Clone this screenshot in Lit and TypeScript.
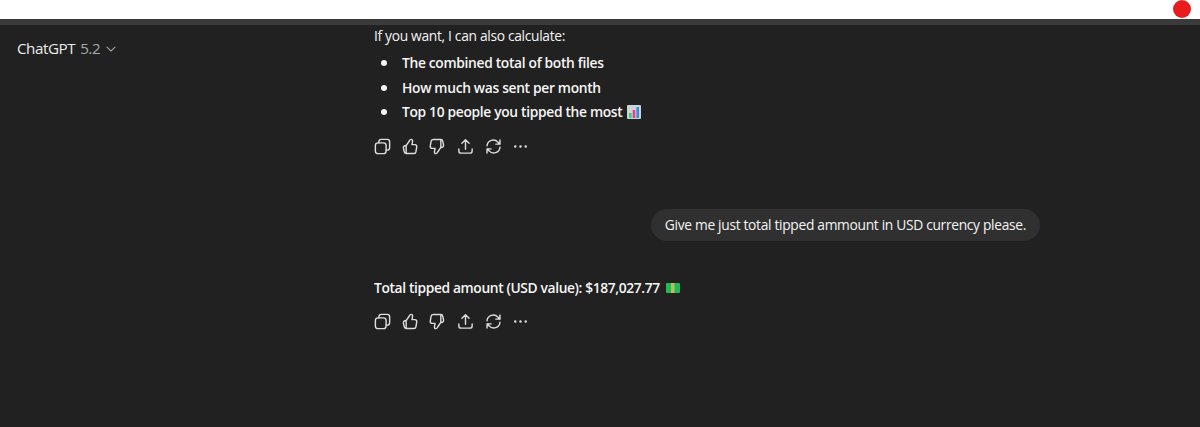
import { LitElement, html, css, svg } from "lit";
import { customElement } from "lit/decorators.js";

const I = (c: unknown) => html`<svg class="ic" viewBox="0 0 20 20" fill="none" stroke="currentColor" stroke-width="1.500" stroke-linecap="round" stroke-linejoin="round">${c}</svg>`;
const copy = I(svg`<path d="M6.200 6.200V5a2.500 2.500 0 0 1 2.500-2.500H15A2.500 2.500 0 0 1 17.500 5v6.300a2.500 2.500 0 0 1-2.500 2.500h-1.200"/><rect x="2.500" y="6.200" width="11.300" height="11.300" rx="2.800"/>`);
const up = I(svg`<path d="M6.500 9 9.800 4.200c.4-.9 1-1.700 1.900-1.700 1.200 0 1.700 1 1.500 2.100L12.600 8h3a2 2 0 0 1 2 2.400l-.8 4.900a2.300 2.300 0 0 1-2.300 2H6.500a2 2 0 0 1-2-1.600L3.600 11.600C3.400 10.200 4.500 9 6 9h.5v8.200"/>`);
const down = I(svg`<path d="M13.500 11 10.200 15.800c-.4.900-1 1.700-1.900 1.700-1.200 0-1.700-1-1.500-2.100L7.400 12h-3a2 2 0 0 1-2-2.400l.8-4.900a2.300 2.300 0 0 1 2.300-2h8a2 2 0 0 1 2 1.600l.9 4.300c.2 1.400-.9 2.400-2.400 2.400h-.500V2.800"/>`);
const share = I(svg`<path d="M10 13V3M6.200 6.500 10 2.800l3.800 3.700M3 12.500v2.200a2.300 2.300 0 0 0 2.300 2.300h9.400a2.300 2.300 0 0 0 2.300-2.300v-2.200"/>`);
const regen = I(svg`<path d="M3.200 9.200a6.500 6.500 0 0 1 11.400-3.800L16.800 7.500M16.800 3.200v4.300h-4.300M16.800 10.800a6.500 6.500 0 0 1-11.400 3.800L3.200 12.500M3.200 16.800v-4.300h4.300"/>`);
const more = html`<svg class="ic" viewBox="0 0 20 20" fill="currentColor"><circle cx="4.500" cy="10" r="1.300"/><circle cx="10" cy="10" r="1.300"/><circle cx="15.500" cy="10" r="1.300"/></svg>`;
const actions = html`<div class="actions"><span class="a">${copy}</span><span class="a">${up}</span><span class="a">${down}</span><span class="a">${share}</span><span class="a">${regen}</span><span class="a">${more}</span></div>`;
const chart = html`<svg class="emoji" viewBox="0 0 14 14"><rect width="14" height="14" rx="1" fill="#cfd3d8"/><rect x="2" y="8" width="2.600" height="5" fill="#2fd08a"/><rect x="5.700" y="5" width="2.600" height="8" fill="#e83e8c"/><rect x="9.400" y="2" width="2.600" height="11" fill="#2f8fe0"/></svg>`;
const cash = html`<svg class="emoji cash" viewBox="0 0 14 10"><rect width="14" height="10" rx="1" fill="#22b857"/><rect x="5" y="0" width="3.500" height="10" fill="#c9b84a"/><circle cx="7" cy="5" r="1.400" fill="#6fdc8c"/></svg>`;

@customElement("app-root")
export class AppRoot extends LitElement {
  static styles = css`
    :host { display: block; height: 427px; background: #212121; color: #f4f4f4; font-family: "Open Sans", "Noto Sans", sans-serif; overflow: hidden; }
    .top { height: 19px; background: #fff; display: flex; justify-content: flex-end; padding-right: 9px; }
    .dot { width: 18px; height: 18px; border-radius: 50%; background: #e81c1f; }
    .bar { height: 6px; background: #3b3b3b; }
    .page { display: grid; grid-template-columns: 374px 666px; }
    .head { padding: 12px 0 0 17px; font-size: 15.200px; line-height: 22px; letter-spacing: -0.450px; display: flex; align-items: flex-start; gap: 5px; }
    .head b { font-weight: 400; color: #ececec; }
    .head span { color: #a8a8a8; }
    .chev { width: 10px; height: 10px; margin-top: 7px; margin-left: 1px; color: #a0a0a0; }
    .main { font-size: 13.800px; letter-spacing: -0.320px; line-height: 20px; display: flex; flex-direction: column; padding-top: 1px; }
    p { margin: 0; color: #f4f4f4; }
    .intro { height: 20px; }
    ul { list-style: none; margin: 7px 0 0; padding: 0; display: flex; flex-direction: column; gap: 4.500px; }
    li { display: flex; align-items: center; font-weight: 600; height: 20px; color: #f6f6f6; }
    li::before { content: ""; width: 6px; height: 6px; border-radius: 50%; background: #f4f4f4; margin: 0 15px 0 7px; flex: none; }
    .emoji { width: 14px; height: 14px; margin-left: 5px; flex: none; }
    .cash { height: 10px; margin-left: 6px; }
    .actions { display: flex; gap: 7.800px; margin: 14px 0 0 -2px; color: #dcdcdc; height: 20px; }
    .a { width: 20px; height: 20px; display: flex; align-items: center; justify-content: center; }
    .ic { width: 19px; height: 19px; display: block; flex: none; }
    .user { display: flex; justify-content: flex-end; margin-top: 53px; }
    .bubble { background: #303030; border-radius: 16px; height: 32px; padding: 0 14px; display: flex; align-items: center; }
    .total { margin-top: 37px; display: flex; align-items: center; font-weight: 600; height: 20px; color: #f6f6f6; letter-spacing: -0.370px; }
    .total + .actions { margin-top: 13px; }
  `;
  render() {
    return html`
      <div class="top"><div class="dot"></div></div>
      <div class="bar"></div>
      <div class="page">
        <div class="head"><b>ChatGPT</b><span>5.2</span>
          <svg class="chev" viewBox="0 0 10 10" fill="none" stroke="currentColor" stroke-width="1.100" stroke-linecap="round" stroke-linejoin="round"><path d="M1 3.200 5 7l4-3.800"/></svg>
        </div>
        <div class="main">
          <p class="intro">If you want, I can also calculate:</p>
          <ul>
            <li>The combined total of both files</li>
            <li>How much was sent per month</li>
            <li>Top 10 people you tipped the most ${chart}</li>
          </ul>
          ${actions}
          <div class="user"><div class="bubble">Give me just total tipped ammount in USD currency please.</div></div>
          <div class="total">Total tipped amount (USD value): $187,027.77 ${cash}</div>
          ${actions}
        </div>
      </div>`;
  }
}
